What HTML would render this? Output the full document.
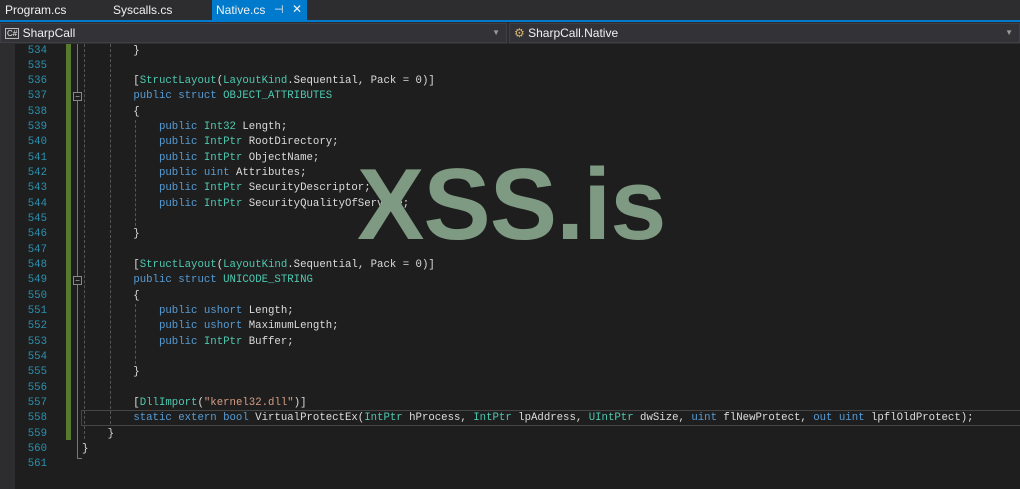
<!DOCTYPE html><html><head><style>
body{margin:0;width:1020px;height:489px;background:#1e1e1e;overflow:hidden;position:relative;font-family:"Liberation Sans",sans-serif}
.tabs{position:absolute;left:0;top:0;width:1020px;height:20px;background:#2d2d30;color:#f1f1f1;font-size:12px}
.tab{position:absolute;top:3px}
.blue{position:absolute;left:0;top:20px;width:1020px;height:2px;background:#007acc}
.bar{position:absolute;left:0;top:22px;width:1020px;height:22px;background:#2d2d30}
.cb{position:absolute;top:1px;height:18px;background:#333337;border:1px solid #3f3f46;color:#f1f1f1;font-size:12px;line-height:18px}
.gut{position:absolute;left:0;top:44px;width:15px;height:445px;background:#2d2d30}
.ln{position:absolute;left:15px;width:32px;text-align:right;color:#2b91af;font:10.7px "Liberation Mono",monospace;height:15px;line-height:15px}
.cd{position:absolute;left:82px;white-space:pre;color:#dcdcdc;font:10.7px "Liberation Mono",monospace;height:15px;line-height:15px}
.k{color:#569cd6}.t{color:#4ec9b0}.s{color:#d69d85}
.dash{position:absolute;width:0;border-left:1px dashed #555}
</style></head><body>
<div class="tabs"><span class="tab" style="left:5px">Program.cs</span><span class="tab" style="left:113px">Syscalls.cs</span>
<div style="position:absolute;left:212px;top:0;width:95px;height:20px;background:#007acc"><span style="position:absolute;left:4px;top:3px">Native.cs</span><span style="position:absolute;left:62px;top:3px;font-size:11px">⊣</span><span style="position:absolute;left:80px;top:2px">✕</span></div></div>
<div class="blue"></div>
<div class="bar">
<div class="cb" style="left:0;width:505px"><span style="display:inline-block;margin-left:4px;border:1px solid #bbb;font-size:8px;line-height:9px;padding:0 1px;vertical-align:1px">C#</span> SharpCall<span style="position:absolute;right:6px;top:0;font-size:8px;color:#999">▼</span></div>
<div class="cb" style="left:509px;width:509px"><span style="color:#d7b36c;margin-left:4px">⚙</span> SharpCall.Native<span style="position:absolute;right:6px;top:0;font-size:8px;color:#999">▼</span></div>
</div>
<div class="gut"></div>
<div style="position:absolute;left:66px;top:44px;width:5px;height:396px;background:#577a2f"></div>
<div style="position:absolute;left:77px;top:44px;width:1px;height:414px;background:#777"></div>
<div style="position:absolute;left:77px;top:458px;width:5px;height:1px;background:#777"></div>
<div style="position:absolute;left:73px;top:92px;width:7px;height:7px;border:1px solid #888;background:#1e1e1e;color:#ccc;font-size:8px;line-height:7px;text-align:center">−</div>
<div style="position:absolute;left:73px;top:276px;width:7px;height:7px;border:1px solid #888;background:#1e1e1e;color:#ccc;font-size:8px;line-height:7px;text-align:center">−</div>
<div class="dash" style="left:84px;top:44px;height:395px"></div>
<div class="dash" style="left:110px;top:44px;height:380px"></div>
<div class="dash" style="left:135px;top:120px;height:106px"></div>
<div class="dash" style="left:135px;top:304px;height:60px"></div>
<div style="position:absolute;left:81px;top:410px;width:945px;height:14px;border:1px solid #464646"></div>
<div id="c"></div>
<div style="position:absolute;left:357px;top:148px;font:bold 101px 'Liberation Sans',sans-serif;color:#7f9a82;letter-spacing:-1px">XSS.is</div>
<script>
var L=[
"        }","",
"        [<span class=t>StructLayout</span>(<span class=t>LayoutKind</span>.Sequential, Pack = 0)]",
"        <span class=k>public struct</span> <span class=t>OBJECT_ATTRIBUTES</span>",
"        {",
"            <span class=k>public</span> <span class=t>Int32</span> Length;",
"            <span class=k>public</span> <span class=t>IntPtr</span> RootDirectory;",
"            <span class=k>public</span> <span class=t>IntPtr</span> ObjectName;",
"            <span class=k>public uint</span> Attributes;",
"            <span class=k>public</span> <span class=t>IntPtr</span> SecurityDescriptor;",
"            <span class=k>public</span> <span class=t>IntPtr</span> SecurityQualityOfService;",
"","        }","",
"        [<span class=t>StructLayout</span>(<span class=t>LayoutKind</span>.Sequential, Pack = 0)]",
"        <span class=k>public struct</span> <span class=t>UNICODE_STRING</span>",
"        {",
"            <span class=k>public ushort</span> Length;",
"            <span class=k>public ushort</span> MaximumLength;",
"            <span class=k>public</span> <span class=t>IntPtr</span> Buffer;",
"","        }","",
"        [<span class=t>DllImport</span>(<span class=s>\"kernel32.dll\"</span>)]",
"        <span class=k>static extern bool</span> VirtualProtectEx(<span class=t>IntPtr</span> hProcess, <span class=t>IntPtr</span> lpAddress, <span class=t>UIntPtr</span> dwSize, <span class=k>uint</span> flNewProtect, <span class=k>out uint</span> lpflOldProtect);",
"    }","}",""];
var h="";for(var i=0;i<L.length;i++){var t=43.5+i*15.33;h+='<div class=ln style="top:'+t+'px">'+(534+i)+'</div><div class=cd style="top:'+t+'px">'+L[i]+'</div>';}
document.getElementById('c').innerHTML=h;
</script>
</body></html>
